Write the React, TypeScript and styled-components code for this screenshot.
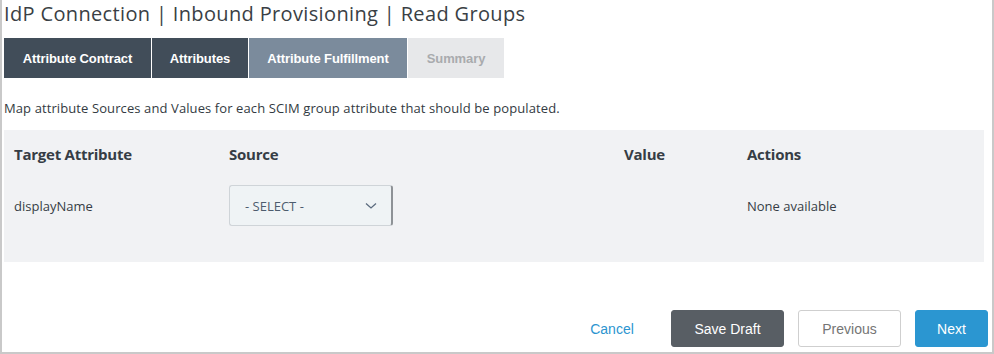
import React from 'react';
import styled, { createGlobalStyle } from 'styled-components';

const GlobalStyle = createGlobalStyle`
  html, body {
    margin: 0;
    padding: 0;
    background: #fff;
  }
  * {
    box-sizing: border-box;
  }
`;

const Frame = styled.div`
  width: 994px;
  height: 354px;
  border: 2px solid #c9c9c9;
  border-top: none;
  padding: 0 2px;
  display: flex;
  flex-direction: column;
  font-family: 'Open Sans', Lato, sans-serif;
  color: #333a42;
`;

const Title = styled.h1`
  margin: 1px 0 0;
  font-size: 20px;
  line-height: 26px;
  font-weight: 400;
  letter-spacing: 0.35px;
  color: #3a3f45;
`;

const TabBar = styled.div`
  display: flex;
  gap: 1px;
  margin-top: 11px;
  height: 40px;
`;

type TabState = 'done' | 'active' | 'todo';

const tabColors: Record<TabState, { bg: string; fg: string }> = {
  done: { bg: '#414d59', fg: '#ffffff' },
  active: { bg: '#7b8b9c', fg: '#ffffff' },
  todo: { bg: '#e7e8ea', fg: '#a9abae' },
};

const Tab = styled.div<{ $state: TabState; $width: number }>`
  width: ${(p) => p.$width}px;
  display: flex;
  align-items: center;
  justify-content: center;
  background: ${(p) => tabColors[p.$state].bg};
  color: ${(p) => tabColors[p.$state].fg};
  font-family: 'Liberation Sans', Arial, sans-serif;
  font-weight: 700;
  font-size: 13px;
  letter-spacing: -0.1px;
`;

const Intro = styled.p`
  margin: 21px 0 0;
  font-size: 13px;
  line-height: 18px;
  letter-spacing: 0.1px;
  color: #333a42;
`;

const Panel = styled.div`
  margin-top: 13px;
  width: 980px;
  height: 132px;
  background: #f1f2f4;
  padding: 14px 10px 0;
`;

const Grid = styled.div`
  display: grid;
  grid-template-columns: 215px 395px 123px 1fr;
  row-gap: 21px;
  align-items: center;
`;

const HeadCell = styled.div`
  font-size: 15px;
  font-weight: 700;
  line-height: 20px;
  letter-spacing: -0.25px;
  color: #363d45;
`;

const Cell = styled.div`
  font-size: 13px;
  line-height: 16px;
  color: #363d45;
`;

const Select = styled.div`
  width: 164px;
  height: 41px;
  display: flex;
  align-items: center;
  justify-content: space-between;
  padding: 0 14px 0 15px;
  background: #eff3f5;
  border: 1px solid #cfd4d8;
  border-right: 2px solid #8e9296;
  border-radius: 3px;
  font-size: 13px;
  color: #4d5c6e;
`;

const Footer = styled.div`
  display: flex;
  justify-content: flex-end;
  align-items: center;
  gap: 14px;
  margin-top: 48px;
  padding-right: 2px;
  font-family: 'Liberation Sans', Arial, sans-serif;
`;

type Variant = 'link' | 'dark' | 'plain' | 'primary';

const btnStyles: Record<Variant, string> = {
  link: 'background: transparent; color: #2c95d0; border: 1px solid transparent;',
  dark: 'background: #585e64; color: #ffffff; border: 1px solid #585e64;',
  plain: 'background: #ffffff; color: #757575; border: 1px solid #cfcfcf;',
  primary: 'background: #2b96d1; color: #ffffff; border: 1px solid #2b96d1;',
};

const Button = styled.button<{ $variant: Variant; $width: number }>`
  width: ${(p) => p.$width}px;
  height: 37px;
  border-radius: 3px;
  font-family: inherit;
  font-size: 14px;
  padding: 0;
  cursor: pointer;
  ${(p) => btnStyles[p.$variant]}
`;

const Chevron = () => (
  <svg width="12" height="8" viewBox="0 0 12 8" fill="none">
    <path d="M1 1.5 L6 6 L11 1.5" stroke="#5b6b7e" strokeWidth="1.3" />
  </svg>
);

const App = () => {
  return (
    <Frame>
      <GlobalStyle />
      <Title>IdP Connection | Inbound Provisioning | Read Groups</Title>
      <TabBar>
        <Tab $state="done" $width={147}>Attribute Contract</Tab>
        <Tab $state="done" $width={96}>Attributes</Tab>
        <Tab $state="active" $width={158}>Attribute Fulfillment</Tab>
        <Tab $state="todo" $width={96}>Summary</Tab>
      </TabBar>
      <Intro>
        Map attribute Sources and Values for each SCIM group attribute that should be populated.
      </Intro>
      <Panel>
        <Grid>
          <HeadCell>Target Attribute</HeadCell>
          <HeadCell>Source</HeadCell>
          <HeadCell>Value</HeadCell>
          <HeadCell>Actions</HeadCell>
          <Cell>displayName</Cell>
          <div>
            <Select>
              <span>- SELECT -</span>
              <Chevron />
            </Select>
          </div>
          <Cell />
          <Cell>None available</Cell>
        </Grid>
      </Panel>
      <Footer>
        <Button $variant="link" $width={90}>Cancel</Button>
        <Button $variant="dark" $width={113}>Save Draft</Button>
        <Button $variant="plain" $width={103}>Previous</Button>
        <Button $variant="primary" $width={73}>Next</Button>
      </Footer>
    </Frame>
  );
};

export default App;
